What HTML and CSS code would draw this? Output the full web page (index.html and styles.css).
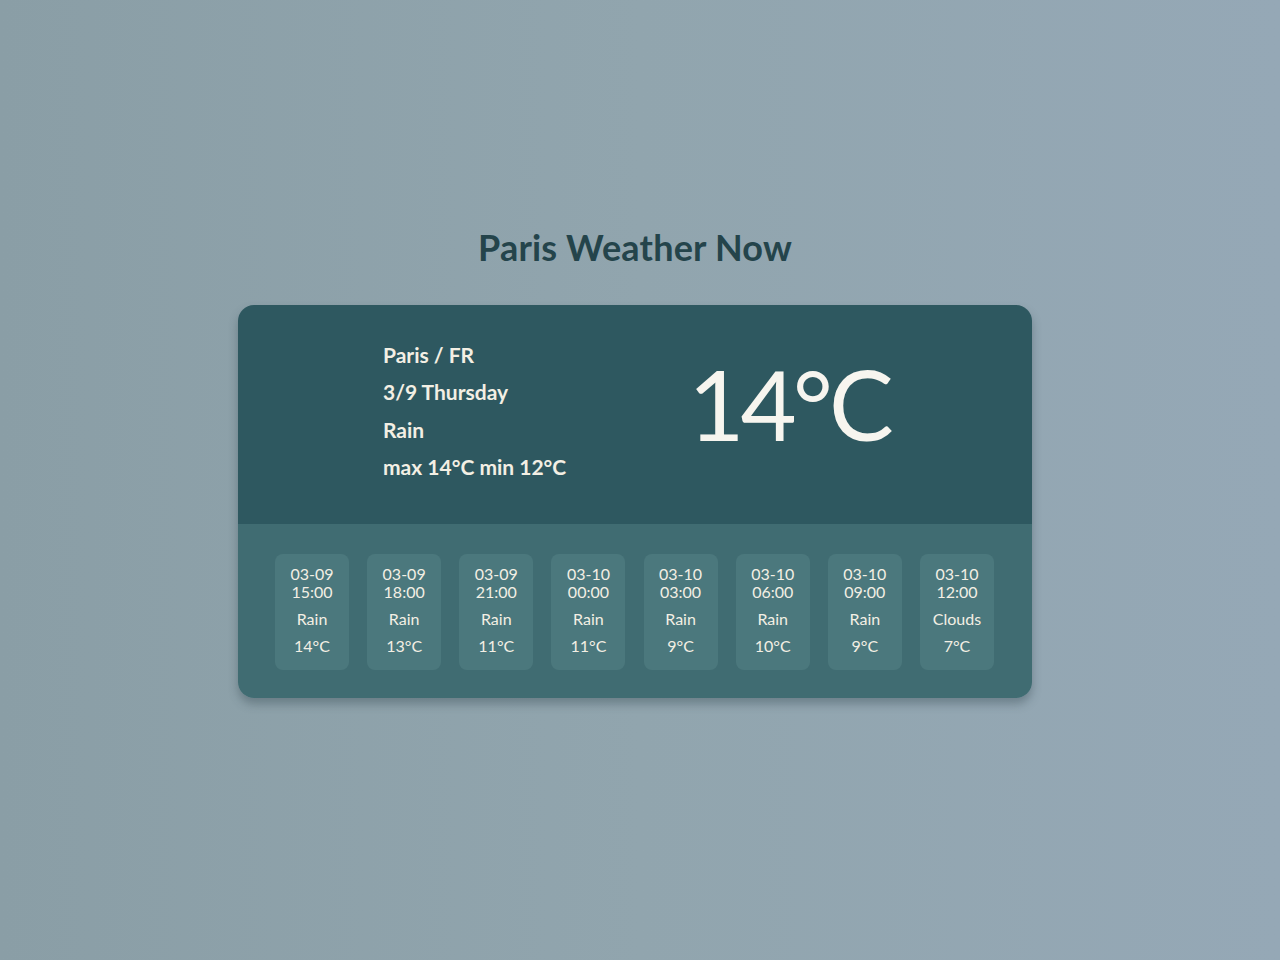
FILE: index.html
```html
<!DOCTYPE html>
<html lang="en">
<head>
<meta charset="utf-8">
<title>Paris Weather Now</title>
<link rel="stylesheet" href="styles.css">
</head>
<body>
<main class="page">
  <h1 class="title">Paris Weather Now</h1>
  <section class="card">
    <div class="current">
      <div class="info">
        <p>Paris / FR</p>
        <p>3/9 Thursday</p>
        <p>Rain</p>
        <p>max 14°C min 12°C</p>
      </div>
      <div class="temp">14°C</div>
    </div>
    <div class="forecast">
      <div class="tile"><div class="when">03-09<br>15:00</div><div class="cond">Rain</div><div class="deg">14°C</div></div>
      <div class="tile"><div class="when">03-09<br>18:00</div><div class="cond">Rain</div><div class="deg">13°C</div></div>
      <div class="tile"><div class="when">03-09<br>21:00</div><div class="cond">Rain</div><div class="deg">11°C</div></div>
      <div class="tile"><div class="when">03-10<br>00:00</div><div class="cond">Rain</div><div class="deg">11°C</div></div>
      <div class="tile"><div class="when">03-10<br>03:00</div><div class="cond">Rain</div><div class="deg">9°C</div></div>
      <div class="tile"><div class="when">03-10<br>06:00</div><div class="cond">Rain</div><div class="deg">10°C</div></div>
      <div class="tile"><div class="when">03-10<br>09:00</div><div class="cond">Rain</div><div class="deg">9°C</div></div>
      <div class="tile"><div class="when">03-10<br>12:00</div><div class="cond">Clouds</div><div class="deg">7°C</div></div>
    </div>
  </section>
</main>
</body>
</html>
```
FILE: styles.css
```css
* { box-sizing: border-box; }
html, body { margin: 0; padding: 0; height: 100%; }
body {
  font-family: "Lato", "Noto Sans", sans-serif;
  background: linear-gradient(90deg, #8a9ea6 0%, #91a5ae 50%, #95a8b6 100%);
  color: #f3efe4;
}
.page {
  display: flex;
  flex-direction: column;
  align-items: center;
  padding-top: 226px;
  padding-right: 10px;
}
.title {
  margin: 0 0 37px;
  font-size: 36px;
  font-weight: 700;
  line-height: 42px;
  color: #24444b;
  letter-spacing: 0.2px;
}
.card {
  width: 794px;
  border-radius: 16px;
  overflow: hidden;
  box-shadow: 0 6px 10px rgba(40, 60, 70, 0.35);
}
.current {
  background: #2e5860;
  height: 219px;
  display: flex;
  align-items: center;
  padding-left: 145px;
  gap: 122px;
}
.info p {
  margin: 0;
  font-size: 21px;
  font-weight: 700;
  line-height: 37.5px;
}
.info { padding-bottom: 8px; }
.temp {
  font-size: 97px;
  font-weight: 400;
  line-height: 1;
  letter-spacing: -4px;
  color: #f7f5ef;
  padding-bottom: 22px;
}
.forecast {
  background: #406c72;
  height: 174px;
  display: flex;
  justify-content: space-between;
  align-items: flex-start;
  padding: 30px 38px 0 37px;
}
.tile {
  background: #4b787d;
  border-radius: 8px;
  width: 74px;
  height: 116px;
  text-align: center;
  padding-top: 11px;
  font-size: 16px;
}
.when { line-height: 18px; }
.cond { margin-top: 9px; line-height: 18px; }
.deg { margin-top: 9px; line-height: 18px; }
```
